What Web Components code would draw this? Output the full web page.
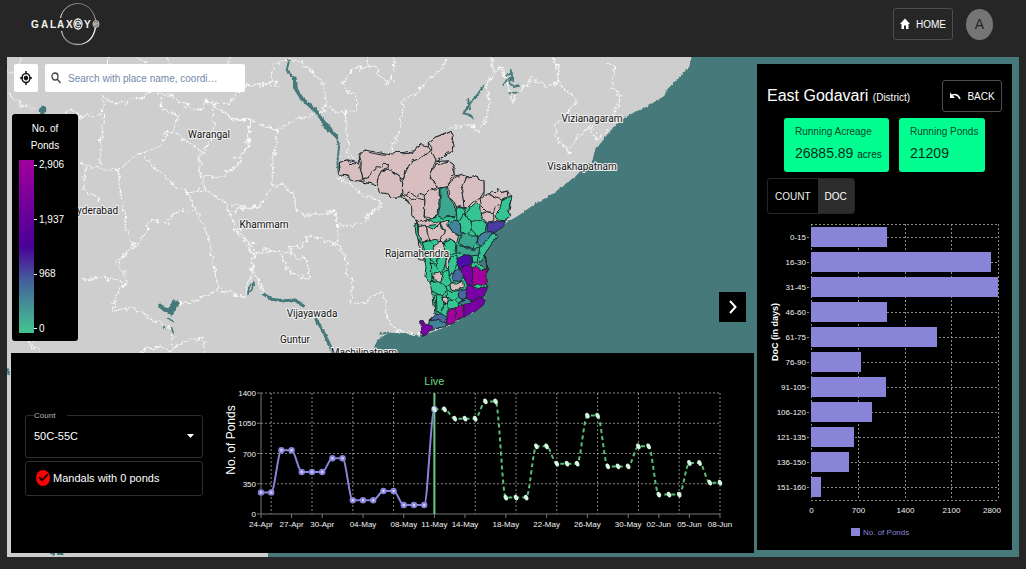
<!DOCTYPE html>
<html lang="en">
<head>
<meta charset="utf-8">
<meta name="viewport" content="width=device-width, initial-scale=1">
<title>GalaxEye - Pond dashboard</title>
<style>
  body {
    margin: 0;
    background: #262626;
    color: #fff;
    font-family: "Liberation Sans", Arial, sans-serif;
    font-size: 10px;
  }
</style>
</head>
<body>
<pond-dashboard></pond-dashboard>

<script>
  const define = (name, html, setup) => {
    customElements.define(name, class extends HTMLElement {
      connectedCallback() {
        if (this.shadowRoot) return;
        const shadow = this.attachShadow({ mode: 'open' });
        shadow.innerHTML = typeof html === 'function' ? html(this) : html;
        if (setup) setup(shadow, this);
      }
    });
  };

  // ---------- header ----------

  define('brand-logo', `
    <style>
      :host { display: block; }
      svg { display: block; width: 72px; height: 46px; }
      text { font: bold 10px "Liberation Sans", Arial, sans-serif; fill: #f2f2f2; }
    </style>
    <svg viewBox="30 1 72 46" role="img" aria-label="GalaxEye">
      <defs>
        <linearGradient id="ringTop" x1="0" y1="1" x2="1" y2="0">
          <stop offset="0" stop-color="#fff"/><stop offset="1" stop-color="#555"/>
        </linearGradient>
        <linearGradient id="ringBottom" x1="1" y1="0" x2="0" y2="1">
          <stop offset="0" stop-color="#fff"/><stop offset=".5" stop-color="#fff"/><stop offset="1" stop-color="#444"/>
        </linearGradient>
      </defs>
      <path d="M60.5 18C62 10 69 3.500 78 3.500S94 11 95.500 20" fill="none" stroke="url(#ringTop)"/>
      <path d="M95.500 27C94 38 87 44.500 78 44.500S63 39 61.500 31" fill="none" stroke="url(#ringBottom)" stroke-width="1.300"/>
      <text y="28" x="31 41 50 57 66">GALAX</text>
      <ellipse cx="78" cy="24" rx="4" ry="5" fill="#262626" stroke="#f2f2f2" stroke-width="1.300"/>
      <path d="M75.500 24h5c0-3.500-5-3.500-5 0s3 3 4.500 2" fill="none" stroke="#f2f2f2" stroke-width="1.200"/>
      <text x="84" y="28">Y</text>
      <ellipse cx="96" cy="24" rx="3" ry="3.500" fill="#555" stroke="#ccc"/>
      <path d="M94.500 24h3c0-2-3-2-3 0s2 2 3 1" fill="none" stroke="#f2f2f2" stroke-width=".800"/>
    </svg>
  `);

  define('icon-button', `
    <style>
      :host { display: block; }
      button {
        display: flex;
        align-items: center;
        justify-content: center;
        gap: 6px;
        width: 60px;
        height: 32px;
        padding: 0;
        border: 1px solid #4a4d55;
        border-radius: 3px;
        background: transparent;
        color: #fff;
        font: 10px "Liberation Sans", Arial, sans-serif;
      }
    </style>
    <button type="button"><slot name="icon"></slot><slot></slot></button>
  `);

  define('app-header', `
    <style>
      :host { display: block; }
      header {
        display: flex;
        align-items: center;
        gap: 13px;
        height: 48px;
        padding: 0 33px 9px 30px;
      }
      brand-logo { margin-right: auto; }
      .avatar {
        display: grid;
        place-items: center;
        width: 27px;
        height: 31px;
        padding: 0;
        border: 0;
        border-radius: 50%;
        background: #757575;
        color: #262626;
        font: 14px "Liberation Sans", Arial, sans-serif;
      }
    </style>
    <header>
      <brand-logo></brand-logo>
      <icon-button>
        <svg slot="icon" width="10" height="12" viewBox="0 0 10 12" fill="#fff"><path d="M5 .500 0 6h1.500v5H4V7.500h2V11h2.500V6H10z"/></svg>
        HOME
      </icon-button>
      <button class="avatar" type="button" aria-label="Account">A</button>
    </header>
  `);

  // ---------- map ----------

  const pink = '#d8bebe', green = '#35c592', sea = '#3aa58d', steel = '#42829a',
        blue = '#4a68a0', indigo = '#4a3ba3', violet = '#4d08a8', purple = '#7904a5', magenta = '#a3049f';

  const upperMandals = [
    [pink, '58,128 72,122 82,120 118,130 118,105 135,90 207,104 285,92 300,75 325,80 325,68 345,52 392,32 402,80 398,95 350,125 385,122 402,135 402,168 425,163 440,170 460,168 492,182 492,230 562,213 575,232 560,300 500,325 440,320 430,420 300,420 290,310 275,260 250,230 215,232 175,195 130,187 58,160'],
    [pink, '118,105 135,90 150,98 160,100 185,105 207,106 210,99 240,97 250,101 270,100 285,92 290,80 300,82 302,74 315,76 325,80 335,95 315,105 300,115 275,125 265,140 255,150 253,165 247,178 235,168 215,150 200,148 150,175 128,175 122,150 124,128'],
    [pink, '58,128 72,122 82,120 90,130 105,132 110,126 118,130 122,150 128,175 120,182 105,183 90,180 85,168 62,165 55,158 60,145'],
    [pink, '128,175 145,174 152,152 166,150 170,140 185,142 188,133 205,134 205,142 185,152 175,170 170,195 150,190 130,187'],
    [pink, '175,170 185,152 192,155 200,148 215,152 220,158 240,172 248,190 247,215 240,230 215,232 205,222 180,218 170,195'],
    [pink, '325,68 345,52 365,45 392,32 400,50 395,58 402,76 398,95 380,100 365,115 350,125 335,97 335,82'],
    [pink, '265,140 275,125 300,115 315,105 335,95 348,120 340,140 330,175 350,195 355,205 330,210 315,226 300,220 290,230 270,218 250,230 247,200 253,165'],
    [pink, '350,130 365,133 385,122 402,135 396,145 403,165 392,175 385,190 388,205 360,202 335,180 330,165'],
    [pink, '385,195 400,175 425,163 440,170 432,195 425,210 430,240 435,265 420,260 410,262 402,245 390,235'],
    [pink, '440,172 460,168 492,182 492,215 480,235 460,245 440,265 432,262 430,240 425,210 432,190'],
    [pink, '247,222 262,228 272,240 288,234 315,240 312,290 322,305 300,312 285,300 275,285 275,260 262,240 248,232'],
    [pink, '315,240 312,228 330,210 358,205 357,260 355,285 335,295 313,290'],
    [pink, '480,235 492,230 505,222 525,232 550,235 545,255 525,262 520,278 500,275 485,260'],
    [pink, '508,222 515,214 530,215 533,205 545,218 562,213 563,230 545,240 525,232'],
    [pink, '485,280 500,275 520,280 522,300 505,310 485,305'],
    [sea, '360,205 380,200 385,230 400,250 408,270 405,290 380,290 370,295 353,287 360,260'],
    [green, '408,260 430,265 438,285 445,300 440,318 420,315 410,290'],
    [green, '440,278 452,262 470,245 482,258 485,290 500,300 495,312 475,320 455,312 440,300'],
    [green, '545,240 576,230 568,255 562,270 572,283 555,302 530,300 525,285 540,270'],
    [indigo, '505,305 530,305 555,303 555,318 535,330 515,345 500,330']
  ];

  const deltaMandals = [
    [green, '75,8 82,12 85,45 97,65 105,90 118,110 124,130 130,180 120,188 105,170 108,140 100,110 98,85 78,45'],
    [pink, '78,0 90,6 110,0 130,8 150,2 150,12 110,18 88,20'],
    [pink, '85,20 110,15 112,38 120,48 118,62 97,67 85,45'],
    [pink, '110,18 130,28 150,10 155,30 168,38 150,62 135,58 120,62 112,38'],
    [pink, '150,8 175,0 170,15 185,30 205,50 200,68 185,60 175,52 155,72 150,60 165,38'],
    [steel, '175,15 190,0 208,4 212,25 210,45 190,40'],
    [green, '208,4 222,-20 240,0 245,25 232,45 215,35'],
    [green, '240,0 252,5 275,0 290,12 285,35 265,50 245,30'],
    [sea, '215,38 235,45 262,45 262,65 250,90 225,80 205,70 212,50'],
    [steel, '265,50 285,36 310,35 290,62 275,80 262,72'],
    [green, '165,65 185,58 198,72 195,98 172,105 160,90'],
    [sea, '200,75 220,80 245,92 270,80 265,108 240,108 215,100 200,98'],
    [green, '245,108 265,105 262,125 250,130'],
    [green, '97,68 118,62 132,78 130,95 142,112 138,132 120,118 108,100'],
    [pink, '130,82 150,60 165,75 162,98 145,115 130,95'],
    [green, '142,118 160,100 168,125 160,150 150,160 138,140'],
    [pink, '165,102 176,112 178,150 168,142 168,125'],
    [green, '178,110 200,105 205,130 190,152 178,170 175,150'],
    [green, '124,128 140,140 150,158 130,160 126,180'],
    [pink, '130,160 150,155 158,170 152,185 132,178'],
    [green, '158,170 160,155 176,150 178,172 185,190 168,200 150,188'],
    [green, '120,188 145,185 168,200 172,215 150,226 125,212'],
    [violet, '203,115 222,106 240,105 248,125 238,135 225,142 208,142 200,130'],
    [blue, '188,152 210,143 218,165 215,185 190,182'],
    [purple, '215,145 240,132 250,150 248,200 228,190 215,165'],
    [magenta, '248,142 262,140 270,152 290,150 292,190 280,198 262,192 248,200'],
    [pink, '180,192 192,185 200,192 218,183 220,200 205,210 182,208'],
    [purple, '228,192 248,200 262,205 278,205 292,200 284,225 270,240 245,245 230,232'],
    [blue, '205,212 228,205 230,235 215,240 205,230'],
    [green, '175,215 205,212 205,232 190,245 172,230'],
    [pink, '158,230 172,228 175,245 165,255'],
    [green, '136,225 158,224 162,255 155,280 138,276'],
    [green, '172,245 190,240 205,248 205,262 175,268'],
    [steel, '205,248 230,235 245,246 222,258'],
    [magenta, '172,272 195,265 197,302 170,320'],
    [magenta, '195,265 220,255 222,290 197,303'],
    [purple, '222,250 245,245 275,232 285,240 280,255 255,275 222,290'],
    [blue, '118,302 138,283 155,282 172,292 168,308 140,300'],
    [steel, '118,302 140,300 168,308 168,320 140,324 125,332 115,318'],
    [purple, '92,303 98,300 105,312 120,316 128,324 118,335 97,350']
  ];

  const polygons = list => list.map(([fill, points]) => `<polygon fill="${fill}" points="${points}"/>`).join('');

  const boundaries = [
    '15,105 60,110 90,100 100,45 150,25 190,40 230,80 255,110 260,160 250,185 180,205 130,225 110,245 70,225 30,210 -20,212',
    '30,210 28,280 0,320 -20,325',
    '110,245 100,330 95,400 70,460 40,475 -20,462',
    '95,405 135,405 165,440 165,480 200,500 285,480 290,520 290,585 210,555 180,590 150,590 150,610 70,600 40,620 35,660 60,700 70,730',
    '290,585 320,620 320,680 340,690 330,760 370,760 420,725 435,740 440,800 470,840 540,855',
    '285,485 300,530 370,520 390,490 425,470 415,450 370,440 330,400 285,380',
    '315,185 322,250 330,320 345,330',
    '255,160 290,190 350,180 350,140 305,105 340,55 400,50 440,100 455,90 465,15',
    '380,15 385,50',
    '620,25 600,60 560,95 530,130 490,150 485,210 475,250 450,310',
    '630,235 690,225 720,245 740,200 750,150 740,100 770,60 790,50 800,90',
    '750,15 760,60',
    '-20,540 20,575 40,620',
    '150,610 205,635 205,690 150,665 120,620',
    '940,20 955,60 955,100 1010,150 990,180 940,230 950,260 985,305 1015,260 1050,225 1070,270 1110,240',
    '1100,40 1125,45 1115,120 1145,140 1125,190',
    '780,50 800,90 820,160 830,130 880,85 920,110 955,100'
  ];

  const westBoundaries = [
    '310,-10 310,60 298,205 355,212 410,165 480,140 500,95 525,95 535,45 490,30 480,-5',
    '245,190 298,205',
    '525,100 600,150 600,220 650,235 720,190 745,120 750,60 700,60 640,10',
    '640,10 640,110 600,175',
    '600,225 615,270 560,275 500,240 430,165',
    '615,270 680,310 690,345 710,380 765,450 755,520 735,590 655,570 570,610 520,610',
    '690,345 720,325 780,320',
    '560,275 620,400 655,570',
    '355,212 365,300 385,400 400,440 440,400 440,365 500,365 530,335 580,335',
    '400,440 355,480 380,545 345,590 340,630 400,625 515,690 515,755',
    '245,540 300,530 380,550',
    '260,200 250,270 300,300',
    '195,40 210,25 240,50 300,45 310,20',
    '420,755 470,740 510,750 560,720 610,715 615,757',
    '80,720 125,757',
    '25,-20 70,20 110,25',
    '310,-10 330,5 380,10 390,-5 430,-5 440,-25 520,-15 540,10 600,30 620,0 640,10 690,10 720,-35 780,-50 840,-45',
    '20,-90 60,-70 65,-130', '325,-130 325,-100', '410,-130 440,-110', '500,-130 520,-100',
    '690,-130 680,-100'
  ];

  const lines = list => list.map(points => `<polyline points="${points}"/>`).join('');

  const cities = [
    ['Warangal', 209, 138], ['Hyderabad', 94, 214], ['Khammam', 264, 228], ['Rajamahendra', 417, 257],
    ['Vijayawada', 312, 317], ['Guntur', 295, 343], ['Machilipatnam', 364, 356],
    ['Vizianagaram', 592, 122], ['Visakhapatnam', 582, 170]
  ];

  // Shapes are digitised at three units to the pixel, labels at one.
  define('district-map', `
    <style>
      :host { display: block; }
      svg { display: block; width: 100%; height: 100%; }
      text {
        font: 10px Roboto, "Noto Sans", sans-serif;
        fill: #111;
        stroke: #f0f0f0;
        stroke-width: 2;
        stroke-linejoin: round;
        paint-order: stroke;
        text-anchor: middle;
      }
      .borders { fill: none; stroke: #f9f9f9; stroke-width: 4; stroke-linejoin: round; stroke-dasharray: 10 3; }
      .mandals { stroke: #1b2a2e; stroke-width: 3; stroke-linejoin: round; }
      .water { fill: none; stroke: #44797a; stroke-linecap: round; stroke-linejoin: round; }
    </style>
    <svg viewBox="7 57 1012 500" preserveAspectRatio="xMinYMin slice" role="img" aria-label="Map of East Godavari">
      <defs>
        <filter id="rough" filterUnits="userSpaceOnUse" x="-740" y="0" width="3200" height="1560">
          <feTurbulence type="fractalNoise" baseFrequency=".06" numOctaves="2" seed="4"/>
          <feDisplacementMap in="SourceGraphic" scale="26" xChannelSelector="R" yChannelSelector="G"/>
        </filter>
        <filter id="ragged" filterUnits="userSpaceOnUse" x="-740" y="0" width="3200" height="1560">
          <feTurbulence type="fractalNoise" baseFrequency=".12" numOctaves="2" seed="9"/>
          <feDisplacementMap in="SourceGraphic" scale="9" xChannelSelector="R" yChannelSelector="G"/>
        </filter>
        <filter id="wavy" filterUnits="userSpaceOnUse" x="240" y="200" width="640" height="700">
          <feTurbulence type="fractalNoise" baseFrequency=".06" numOctaves="1" seed="2"/>
          <feDisplacementMap in="SourceGraphic" scale="12" xChannelSelector="R" yChannelSelector="G"/>
        </filter>
      </defs>
      <rect width="2400" height="1400" fill="#cecece"/>
      <g transform="translate(240 50) scale(.33333)">
        <path fill="#44797a" filter="url(#ragged)" d="M1360 0L1348 50L1280 120L1273 138L1220 170L1180 188L1135 215L1105 250L1090 270L1065 300L1058 330L1005 380L940 430L880 465L830 500L790 522L750 560L720 600L715 640L740 720L725 770L620 830L550 856L500 850L450 848L420 862L405 885L396 910L300 1100L84 1500L84 1700H6000V0Z"/>
        <g class="borders" filter="url(#rough)">
          ${lines(boundaries)}
          <g transform="translate(-720 150)">${lines(westBoundaries)}</g>
        </g>
        <g class="water" filter="url(#ragged)">
          <path stroke-width="6" d="M147 32L140 60L160 82L168 118L185 145M290 260L297 290L292 340L297 372"/>
          <path stroke-width="11" d="M165 85L168 118L185 145L230 185L262 232L290 260"/>
          <path stroke-width="17" d="M256 225L268 238"/>
          <path stroke-width="9" d="M70 732L95 748L130 752L165 750L190 768M228 808L245 835L262 870L276 900"/>
          <path stroke-width="6" d="M730 108L712 135L695 152L685 170L670 190L690 195L700 205M685 150L690 178"/>
          <path stroke-width="5" d="M22 732L28 710L42 698L36 718L24 732M418 852L445 848M790 105L800 90L812 82L808 100L825 110L838 108M805 130L830 128M800 75L818 70M812 60L820 95"/>
          <path stroke-width="12" d="M-240 767L-225 780L-205 775L-198 755M-225 780L-205 790L-187 758M-210 775L-205 790"/>
          <path stroke-width="4" d="M-215 805L-200 815M-230 830L-222 838M-206 830L-200 850"/>
          <path stroke-width="17" d="M-596 182L-590 176L-590 184"/>
          <path stroke-width="10" d="M-566 1505L-560 1512M-545 1510L-535 1510M-699 960L-694 970"/>
        </g>
        <g class="mandals" filter="url(#wavy)">
          <g transform="translate(240 210)">${polygons(upperMandals.slice(0, 1))}</g>
          <polygon fill="${green}" points="600,415 640,480 690,470 730,500 770,560 715,640 735,660 738,720 720,770 625,820 585,790 575,700 555,600 530,520 590,500"/>
          <g transform="translate(240 210)">${polygons(upperMandals.slice(1))}</g>
          <g transform="translate(450 510)">${polygons(deltaMandals)}</g>
          <path fill="none" stroke-width="6" d="M732 616L740 628L742 664"/>
        </g>
      </g>
      ${cities.map(([name, x, y]) => `<text x="${x}" y="${y}">${name}</text>`).join('')}
    </svg>
  `);

  define('map-search', `
    <style>
      :host { display: flex; gap: 7px; }
      button, form {
        display: flex;
        align-items: center;
        height: 28px;
        border: 0;
        border-radius: 2px;
        background: #fff;
      }
      button { justify-content: center; width: 24px; padding: 0; }
      form { gap: 7px; width: 200px; padding: 0 6px; box-sizing: border-box; }
      input {
        flex: 1;
        min-width: 0;
        padding: 0;
        border: 0;
        outline: 0;
        background: none;
        font: 10px "Liberation Sans", Arial, sans-serif;
      }
      input::placeholder { color: #7388ab; opacity: 1; }
    </style>
    <button type="button" aria-label="My location">
      <svg width="12" height="14" viewBox="0 0 12 14" fill="none" stroke="#111"><ellipse cx="6" cy="7" rx="4" ry="4.500" stroke-width="1.500"/><ellipse cx="6" cy="7" rx="1.800" ry="2" fill="#111"/><path d="M6 0v3M6 11v3M0 7h2.500M9.500 7H12" stroke-width="1.500"/></svg>
    </button>
    <form>
      <svg width="10" height="12" viewBox="0 0 10 12" fill="none" stroke="#444" stroke-width="1.300"><ellipse cx="4" cy="4.500" rx="3" ry="3.500"/><path d="M6 7l3.500 4"/></svg>
      <input type="text" aria-label="Search" placeholder="Search with place name, coordi…">
    </form>
  `);

  define('map-legend', `
    <style>
      :host {
        display: block;
        width: 66px;
        height: 227px;
        box-sizing: border-box;
        padding: 6px 7px 0;
        border-radius: 3px;
        background: #000;
        line-height: 17px;
        text-align: center;
      }
      .scale { display: flex; height: 173px; margin-top: 6px; }
      .ramp { width: 15px; background: linear-gradient(#a0009c, #4a0098 50%, #45609b 70%, #45bf91 98%); }
      ul {
        display: flex;
        flex-direction: column;
        justify-content: space-between;
        height: 178px;
        margin: -2px 0 0;
        padding: 0;
        list-style: none;
        line-height: 14px;
      }
      li { display: flex; align-items: center; gap: 2px; }
      li::before { content: ""; width: 3px; height: 1px; background: #fff; }
    </style>
    No. of<br>Ponds
    <div class="scale">
      <div class="ramp"></div>
      <ul><li>2,906</li><li>1,937</li><li>968</li><li>0</li></ul>
    </div>
  `);

  // ---------- timeline panel ----------

  define('pond-filters', `
    <style>
      :host { display: flex; flex-direction: column; gap: 3px; font-size: 11px; }
      fieldset, .check { border: 1px solid #2e2e2e; border-radius: 3px; }
      fieldset { margin: 0; padding: 0 8px 0 8px; min-width: 0; height: 47px; box-sizing: border-box; }
      legend { height: 10px; padding: 0 12px 0 0; color: #b5b5b5; font-size: 8px; line-height: 10px; }
      .pick { display: flex; align-items: center; height: 30px; }
      select {
        flex: 1;
        appearance: none;
        padding: 0;
        border: 0;
        outline: 0;
        background: transparent;
        color: #fff;
        font: 11px "Liberation Sans", Arial, sans-serif;
      }
      .check { display: flex; align-items: center; gap: 3px; height: 33px; padding-left: 10px; }
      input {
        appearance: none;
        display: grid;
        place-items: center;
        width: 14px;
        height: 16px;
        margin: 0;
        border-radius: 50%;
        background: #f60505;
      }
      input:checked::before {
        content: "";
        width: 7px;
        height: 3px;
        margin-bottom: 3px;
        border: solid #260000;
        border-width: 0 0 2px 2px;
        transform: rotate(-45deg);
      }
    </style>
    <fieldset>
      <legend><label for="count">Count</label></legend>
      <div class="pick">
        <select id="count"><option>50C-55C</option></select>
        <svg width="7" height="4" viewBox="0 0 7 4" fill="#fff"><path d="M0 0h7L3.500 4z"/></svg>
      </div>
    </fieldset>
    <label class="check"><input type="checkbox" checked>Mandals with 0 ponds</label>
  `);

  const actual = [250, 250, 737, 737, 486, 486, 486, 644, 644, 158, 158, 158, 266, 266, 104, 104, 104, 1211];
  const forecast = [1211, 1211, 1103, 1103, 1103, 1303, 1303, 190, 190, 190, 783, 783, 582, 582, 582,
    1138, 1138, 551, 551, 551, 783, 783, 224, 224, 224, 590, 590, 362, 362];
  const dayTicks = { 0: '24-Apr', 3: '27-Apr', 6: '30-Apr', 10: '04-May', 14: '08-May', 17: '11-May', 20: '14-May',
    24: '18-May', 28: '22-May', 32: '26-May', 36: '30-May', 39: '02-Jun', 42: '05-Jun', 45: '08-Jun' };

  define('pond-timeline', `
    <style>
      :host { display: block; }
      svg { display: block; width: 100%; }
      text { font: 8px "Liberation Sans", Arial, sans-serif; fill: #f2f2f2; }
      .days, .live, .title { text-anchor: middle; }
      .counts { text-anchor: end; }
      .title { font-size: 12px; fill: #fff; }
      .live { font-size: 11px; fill: #6fd886; }
      .grid { stroke: #858585; stroke-dasharray: 2 2; }
      .axis { stroke: #777; }
    </style>
    <svg viewBox="0 0 531 160" role="img" aria-label="Number of ponds per day"></svg>
  `, shadow => {
    const left = 38, top = 20, height = 121, width = 459;
    const x = day => Math.round((left + day * width / 45) * 10) / 10;
    const y = value => Math.round((top + height - value * height / 1400) * 10) / 10;
    const curve = (values, start) => values.map((value, i) => {
      if (!i) return `M${x(start)} ${y(value)}`;
      const from = x(start + i - 1), to = x(start + i);
      return `C${from + 3.4} ${y(values[i - 1])} ${to - 3.4} ${y(value)} ${to} ${y(value)}`;
    }).join('');

    let out = '';
    for (const v of [350, 700, 1050, 1400]) out += `<path class="grid" d="M${left} ${y(v)}H${left + width}"/>`;
    for (let day = 1; day <= 45; day += 4) out += `<path class="grid" d="M${x(day)} ${top}V${top + height}"/>`;
    out += `<path class="axis" fill="none" d="M${left} ${top}V${top + height}H${left + width}"/>`;
    for (const v of [0, 350, 700, 1050, 1400]) {
      out += `<path class="axis" d="M${left - 4} ${y(v)}h4"/><text class="counts" x="${left - 5}" y="${y(v) + 3}">${v}</text>`;
    }
    for (const day in dayTicks) {
      out += `<path class="axis" d="M${x(day)} ${top + height}v4"/><text class="days" x="${x(day)}" y="${top + height + 13}">${dayTicks[day]}</text>`;
    }
    out += `<text class="title" transform="translate(12 67) rotate(-90)">No. of Ponds</text>`;
    out += `<path d="${curve(actual, 0)}" fill="none" stroke="#8884d8" stroke-width="2"/>`;
    out += `<path d="M${x(17)} ${top}V${top + height}" stroke="#67c983" stroke-width="2"/>`;
    out += `<text class="live" x="${x(17)}" y="12">Live</text>`;
    out += `<path d="${curve(forecast, 17)}" fill="none" stroke="#59bd78" stroke-width="2" stroke-dasharray="4 3"/>`;
    actual.forEach((v, i) => {
      out += `<circle cx="${x(i)}" cy="${y(v)}" r="2.2" fill="#d9d6ff" stroke="#8884d8" stroke-width="2"/>`;
    });
    forecast.forEach((v, i) => {
      out += `<ellipse cx="${x(i + 17)}" cy="${y(v)}" rx="2" ry="3" transform="rotate(-25 ${x(i + 17)} ${y(v)})" fill="#d5f7df"/>`;
    });
    shadow.querySelector('svg').innerHTML = out;
  });

  define('timeline-panel', `
    <style>
      :host {
        display: grid;
        grid-template-columns: 178px 1fr;
        column-gap: 20px;
        align-items: center;
        min-height: 200px;
        padding-left: 14px;
        background: #000;
      }
    </style>
    <pond-filters></pond-filters>
    <pond-timeline></pond-timeline>
  `);

  // ---------- district panel ----------

  define('stat-card', el => `
    <style>
      :host {
        display: block;
        padding: 7px 11px 0;
        height: 54px;
        box-sizing: border-box;
        border-radius: 3px;
        background: #02fd90;
        color: #04492c;
        line-height: 14px;
        white-space: nowrap;
      }
      .value { margin-top: 4px; font-size: 14px; line-height: 20px; color: #032c1b; }
      ::slotted(small) { font-size: 10px; }
    </style>
    <div>${el.getAttribute('label')}</div>
    <div class="value"><slot></slot></div>
  `);

  const docs = [['0-15', 1143], ['16-30', 2690], ['31-45', 2795], ['46-60', 1143], ['61-75', 1882], ['76-90', 754],
    ['91-105', 1118], ['106-120', 918], ['121-135', 639], ['136-150', 574], ['151-160', 145]];

  define('doc-chart', `
    <style>
      :host { display: block; }
      svg { display: block; width: 100%; }
      text { font: 8px "Liberation Sans", Arial, sans-serif; fill: #f2f2f2; }
      .range { text-anchor: end; }
      .tick, .title { text-anchor: middle; }
      .title { font-size: 9px; font-weight: bold; fill: #fff; }
      .key { fill: #8884d8; }
      .grid { stroke: #8c8c80; stroke-dasharray: 2 2; }
    </style>
    <svg viewBox="0 0 235 320" role="img" aria-label="Ponds by days of culture"></svg>
  `, shadow => {
    const left = 44, top = 4, width = 187, step = 25, height = step * docs.length + 1;
    let out = `<path class="grid" d="M${left} ${top + .5}h${width}M${left} ${top + height + .5}h${width}"/>`;
    for (let i = 0; i < 5; i++) {
      const x = Math.round(left + i * width / 4) + .5;
      out += `<path class="grid" d="M${x} ${top}v${height}"/>`;
      out += `<text class="tick" x="${Math.min(x, 225)}" y="${top + height + 13}">${i * 700}</text>`;
    }
    docs.forEach(([range, value], i) => {
      const mid = top + i * step + 13;
      out += `<path class="grid" d="M${left - 4} ${mid + .5}h${width + 4}"/>`;
      out += `<rect x="${left}" y="${mid - 10}" width="${Math.round(value * width / 2800)}" height="20" fill="#8884d8"/>`;
      out += `<text class="range" x="${left - 5}" y="${mid + 3}">${range}</text>`;
    });
    out += `<text class="title" transform="translate(11 112) rotate(-90)">DoC (in days)</text>`;
    out += `<rect class="key" x="84" y="308" width="9" height="8"/><text class="key" x="96" y="315">No. of Ponds</text>`;
    shadow.querySelector('svg').innerHTML = out;
  });

  define('district-panel', `
    <style>
      :host { display: flex; flex-direction: column; padding: 16px 10px 10px; background: #000; box-sizing: border-box; }
      .head { display: flex; align-items: center; justify-content: space-between; white-space: nowrap; }
      h1 { margin: 0; font-size: 16px; font-weight: normal; }
      h1 small { font-size: 10px; }
      .cards { display: flex; gap: 10px; padding: 6px 0 6px 17px; }
      stat-card:first-child { width: 105px; }
      stat-card:last-child { width: 86px; }
      .toggle { display: flex; align-self: flex-start; border: 1px solid #262626; border-radius: 3px; overflow: hidden; }
      .toggle button {
        height: 34px;
        padding: 0 7px;
        border: 0;
        background: none;
        color: #eee;
        font: 10px "Liberation Sans", Arial, sans-serif;
      }
      .toggle button[aria-pressed="true"] { background: #2d2d2d; color: #fff; }
      doc-chart { margin-top: 6px; }
    </style>
    <div class="head">
      <h1>East Godavari <small>(District)</small></h1>
      <icon-button>
        <svg slot="icon" width="12" height="8" viewBox="0 0 12 8" fill="none" stroke="#fff" stroke-width="1.600"><path d="M11 7C9 2 5 1.500 2 4"/><path d="M1 .500V6h5z" fill="#fff" stroke="none"/></svg>
        BACK
      </icon-button>
    </div>
    <div class="cards">
      <stat-card label="Running Acreage">26885.89 <small>acres</small></stat-card>
      <stat-card label="Running Ponds">21209</stat-card>
    </div>
    <div class="toggle">
      <button type="button" aria-pressed="false">COUNT</button>
      <button type="button" aria-pressed="true">DOC</button>
    </div>
    <doc-chart></doc-chart>
  `);

  // ---------- page ----------

  define('pond-dashboard', `
    <style>
      :host { display: flex; flex-direction: column; min-height: 100vh; }
      main {
        position: relative;
        flex: 1;
        display: grid;
        grid-template-columns: 1fr 255px;
        column-gap: 3px;
        margin: 0 7px 12px;
        padding: 7px 7px 4px 4px;
        overflow: hidden;
      }
      /* the map fills the stage underneath the panels */
      district-map { position: absolute; inset: 0; }
      .left, district-panel { position: relative; min-width: 0; }
      .left { display: flex; flex-direction: column; }
      map-search { padding-left: 3px; }
      .tools { flex: 1; display: flex; justify-content: space-between; padding: 22px 8px 12px 1px; }
      .tools button {
        align-self: flex-end;
        display: grid;
        place-items: center;
        width: 27px;
        height: 30px;
        margin-bottom: 19px;
        padding: 0;
        border: 0;
        background: #000;
      }
      district-panel { margin-bottom: 3px; }
    </style>
    <app-header></app-header>
    <main>
      <district-map></district-map>
      <div class="left">
        <map-search></map-search>
        <div class="tools">
          <map-legend></map-legend>
          <button type="button" aria-label="Next">
            <svg width="8" height="14" viewBox="0 0 8 14" fill="none" stroke="#fff" stroke-width="2"><path d="M1 1l5.500 6L1 13"/></svg>
          </button>
        </div>
        <timeline-panel></timeline-panel>
      </div>
      <district-panel></district-panel>
    </main>
  `);
</script>
</body>
</html>
